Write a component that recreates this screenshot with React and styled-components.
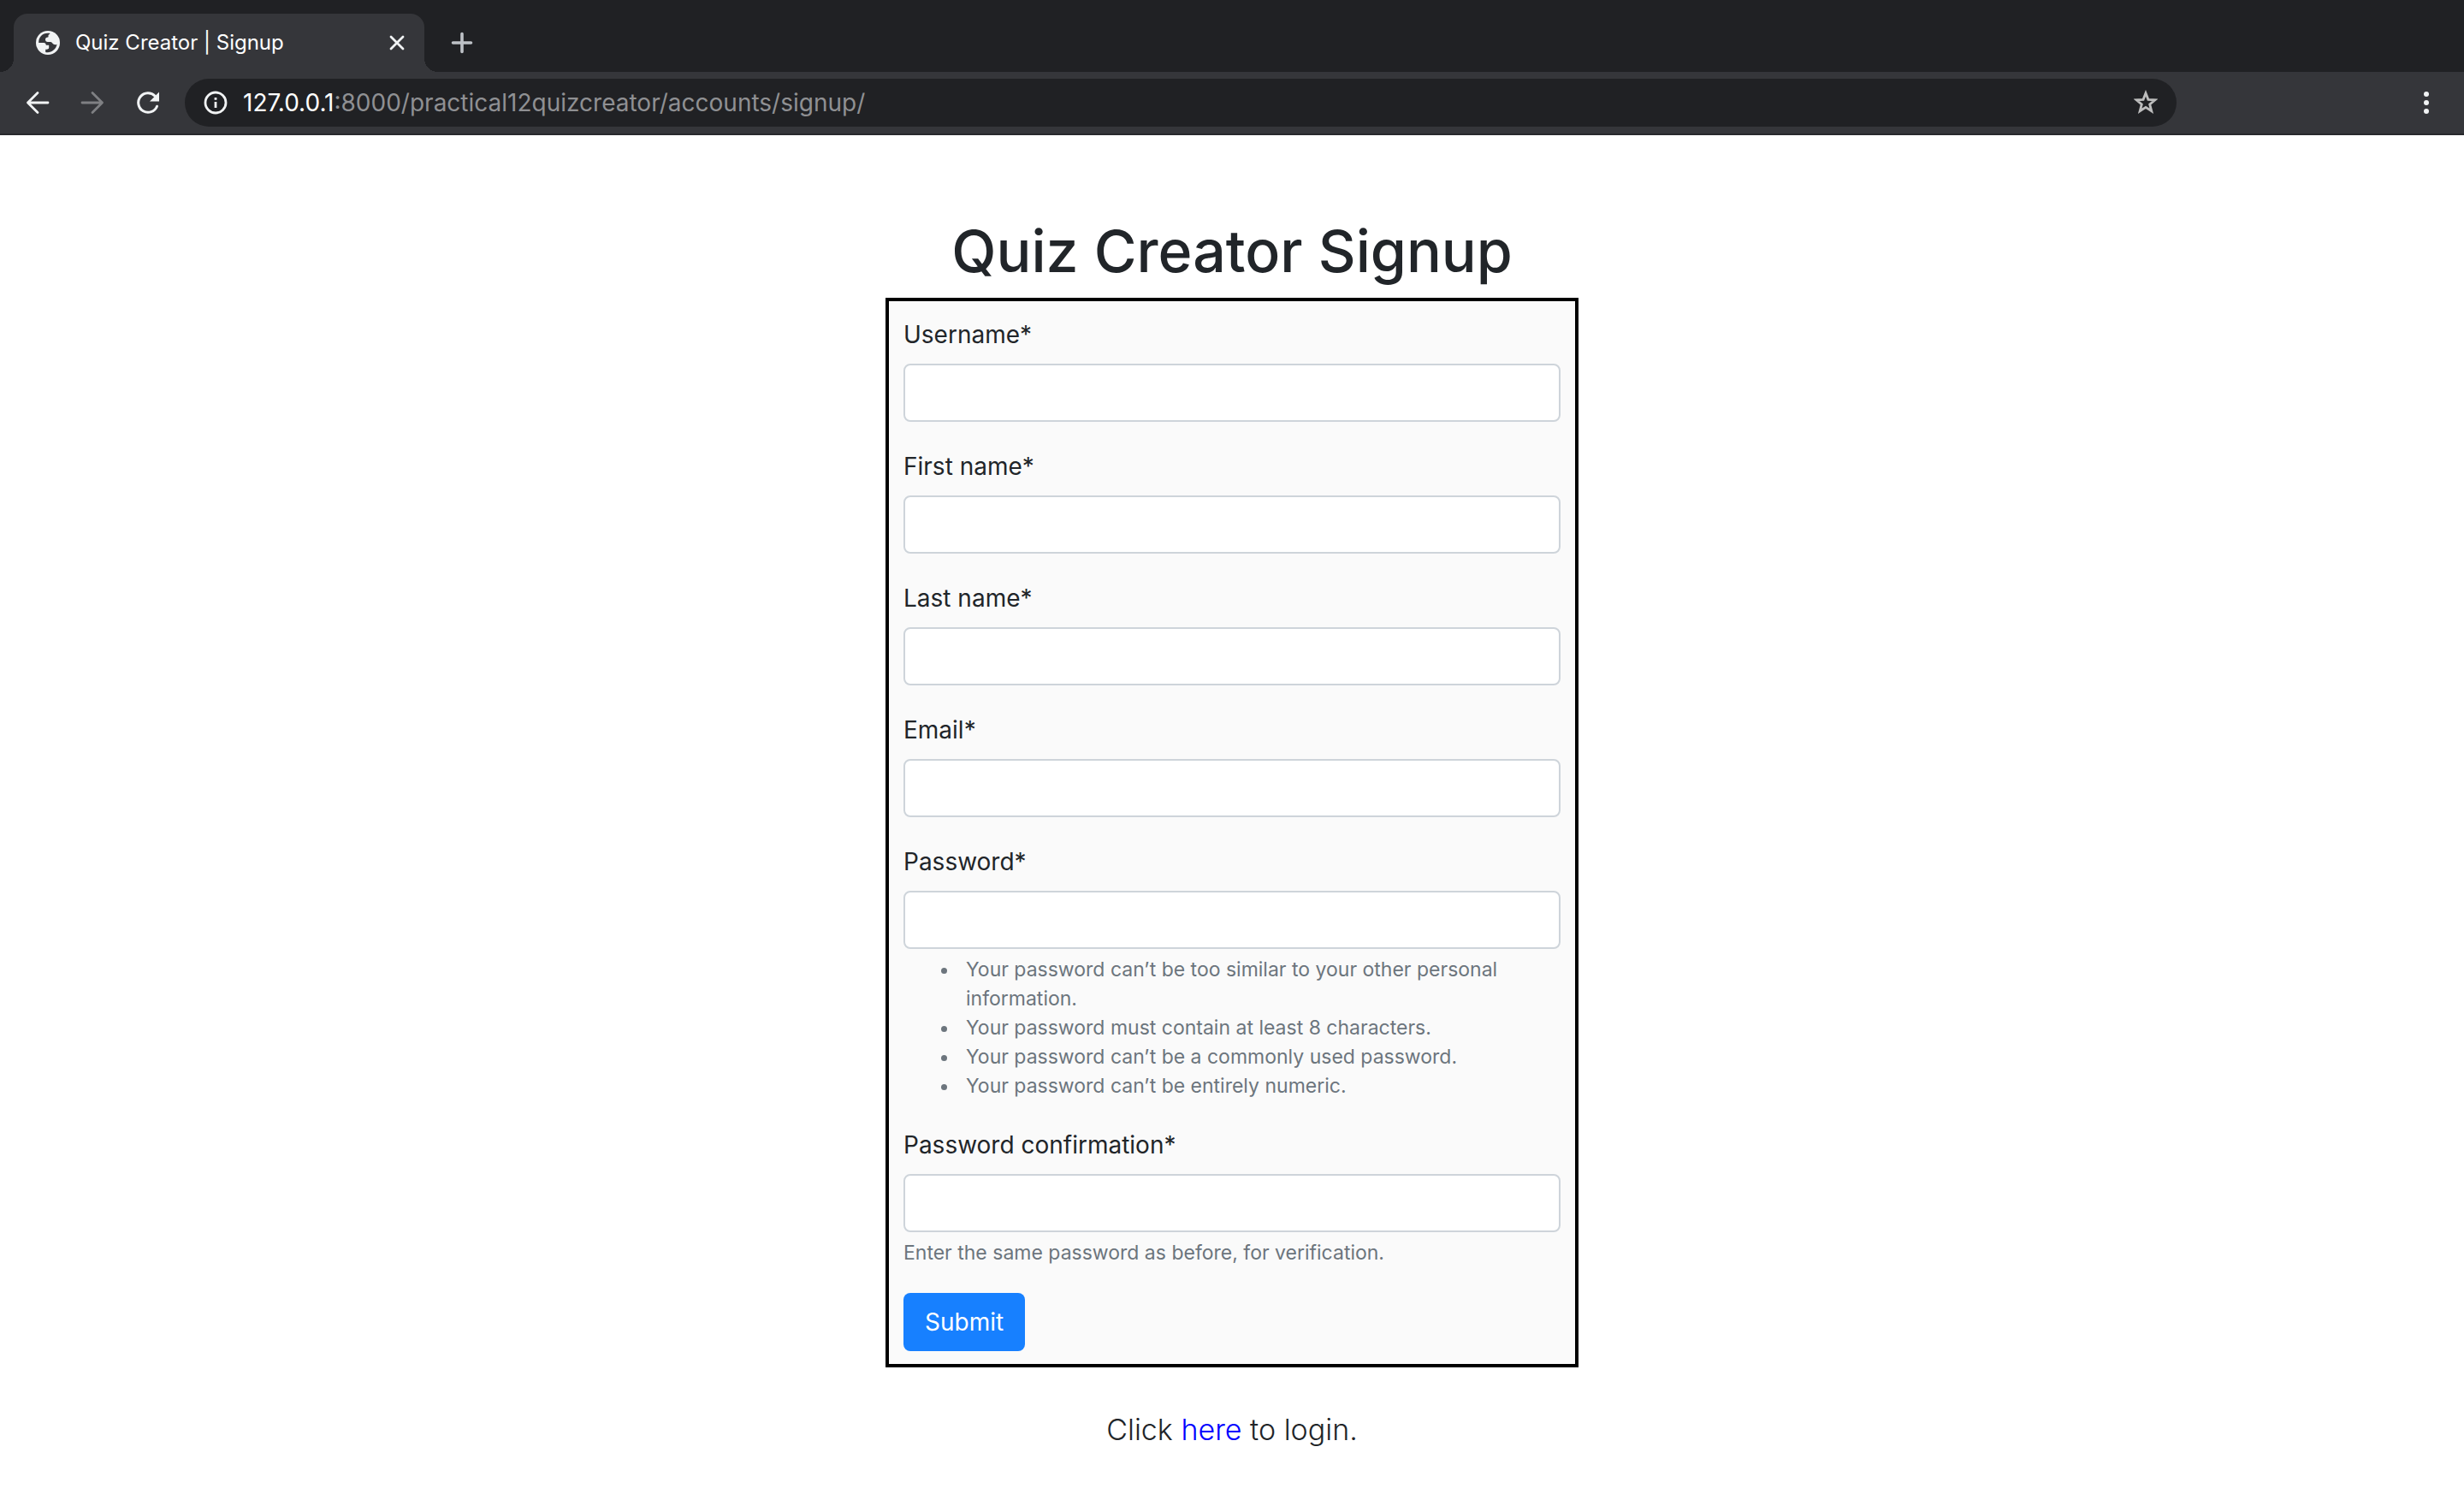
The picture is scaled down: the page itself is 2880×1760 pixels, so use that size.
import React from "react";
import styled, { createGlobalStyle } from "styled-components";

const GlobalStyle = createGlobalStyle`
  * { box-sizing: border-box; }
  body {
    margin: 0;
    background: #fff;
    color: #212529;
    font-family: Inter, Roboto, "Liberation Sans", sans-serif;
  }
  button, input { font: inherit; }
`;

const TabStrip = styled.header`
  display: flex;
  align-items: flex-end;
  height: 84px;
  padding: 0 16px;
  background: #202124;
`;

const Tab = styled.div`
  position: relative;
  display: flex;
  align-items: center;
  width: 480px;
  height: 68px;
  padding: 0 18px 0 26px;
  border-radius: 16px 16px 0 0;
  background: #35363a;
  color: #fff;

  &::before,
  &::after {
    content: "";
    position: absolute;
    bottom: 0;
    width: 16px;
    height: 16px;
  }
  &::before {
    right: 100%;
    background: radial-gradient(circle at 0 0, transparent 16px, #35363a 16px);
  }
  &::after {
    left: 100%;
    background: radial-gradient(circle at 100% 0, transparent 16px, #35363a 16px);
  }
`;

const TabTitle = styled.span`
  flex: 1;
  margin-left: 18px;
  font-size: 24px;
  line-height: 32px;
  white-space: nowrap;
`;

const IconButton = styled.button`
  display: flex;
  align-items: center;
  justify-content: center;
  flex: none;
  width: ${(p) => p.$width || 28}px;
  height: 68px;
  padding: 0;
  border: 0;
  background: none;
  color: ${(p) => p.$color || "#f1f3f4"};
`;

const NewTabButton = styled(IconButton)`
  margin-left: 28px;
`;

const Toolbar = styled.nav`
  display: flex;
  align-items: center;
  height: 74px;
  padding-left: 12px;
  border-bottom: 2px solid #28292c;
  background: #35363a;
`;

const AddressBar = styled.div`
  display: flex;
  align-items: center;
  flex: 1;
  height: 56px;
  margin-left: 12px;
  padding: 0 22px;
  border-radius: 28px;
  background: #202124;
  color: #f1f3f4;
`;

const Url = styled.span`
  flex: 1;
  margin-left: 18px;
  font-size: 28px;
  line-height: 40px;
  color: #8f9093;
  white-space: nowrap;
`;

const Host = styled.span`
  color: #fff;
`;

const ToolbarEnd = styled.div`
  display: flex;
  justify-content: flex-end;
  width: 336px;
  padding-right: 30px;
`;

const Page = styled.main`
  display: flex;
  flex-direction: column;
  align-items: center;
  padding: 91px 16px;
`;

const Heading = styled.h1`
  margin: 0 0 11px;
  font-size: 68px;
  font-weight: 500;
  line-height: 88px;
`;

const Form = styled.form`
  width: 810px;
  max-width: 100%;
  padding: 17px 17px 15px;
  border: 4px solid #000;
  background: #fafafa;
`;

const Field = styled.div`
  margin-bottom: 30px;
`;

const Label = styled.label`
  display: block;
  margin-bottom: 11px;
  font-size: 28px;
  line-height: 45px;
`;

const TextInput = styled.input`
  display: block;
  width: 100%;
  height: 68px;
  padding: 10px 22px;
  border: 2px solid #ced4da;
  border-radius: 8px;
  background: #fff;
  font-size: 28px;
`;

const Help = styled.div`
  margin-top: 7px;
  color: #6c757d;
  font-size: 23px;
  line-height: 34px;
`;

const RuleList = styled.ul`
  margin: 0;
  padding-left: 65px;
`;

const Rule = styled.li`
  padding-left: 8px;
`;

const SubmitButton = styled.button`
  display: block;
  height: 68px;
  padding: 0 25px;
  border: 0;
  border-radius: 8px;
  background: #1780ff;
  color: #fff;
  font-size: 28px;
`;

const LoginLine = styled.p`
  margin: 50px 0 0;
  font-size: 34px;
  font-weight: 300;
  line-height: 46px;
`;

const LoginLink = styled.a`
  color: #00f;
  text-decoration: none;
`;

const Icon = ({ size = 28, children }) => (
  <svg
    width={size}
    height={size}
    viewBox="0 0 28 28"
    fill="none"
    stroke="currentColor"
    strokeWidth="2.8"
    strokeLinecap="round"
    strokeLinejoin="round"
    aria-hidden="true"
  >
    {children}
  </svg>
);

const GlobeIcon = () => (
  <Icon>
    <circle cx="14" cy="14" r="14" fill="#f1f3f4" stroke="none" />
    <path
      d="M16.500 3C12 2.300 8.500 3.500 6 6 4 8.200 3.200 10.500 3.200 14h6c1.600 0 2.600 1.200 2.600 2.800h3.400v3c0 1.400-1.400 2-4 2v3.100c5.600 1.500 12.200-2.400 13.400-9.100-1.500.8-3 .7-4.300-.2-1.200-.9-1.600-2.600-3.300-2.600h-3.200c-1.800 0-2.800-1.200-2.800-2.700 0-1.600 1.200-2.600 3-2.700 1 0 .2-1.500.6-2.600.3-.9 1.900-1 1.900-2z"
      fill="#35363a"
      stroke="none"
    />
  </Icon>
);

const fields = [
  { id: "username", label: "Username*", type: "text" },
  { id: "first_name", label: "First name*", type: "text" },
  { id: "last_name", label: "Last name*", type: "text" },
  { id: "email", label: "Email*", type: "email" },
  {
    id: "password1",
    label: "Password*",
    type: "password",
    rules: [
      "Your password can’t be too similar to your other personal information.",
      "Your password must contain at least 8 characters.",
      "Your password can’t be a commonly used password.",
      "Your password can’t be entirely numeric.",
    ],
  },
  {
    id: "password2",
    label: "Password confirmation*",
    type: "password",
    hint: "Enter the same password as before, for verification.",
  },
];

const FormField = ({ id, label, type, rules, hint }) => (
  <Field>
    <Label htmlFor={id}>{label}</Label>
    <TextInput id={id} name={id} type={type} />
    {rules && (
      <Help>
        <RuleList>
          {rules.map((rule) => (
            <Rule key={rule}>{rule}</Rule>
          ))}
        </RuleList>
      </Help>
    )}
    {hint && <Help>{hint}</Help>}
  </Field>
);

export default function App() {
  return (
    <>
      <GlobalStyle />
      <TabStrip>
        <Tab>
          <GlobeIcon />
          <TabTitle>Quiz Creator | Signup</TabTitle>
          <IconButton aria-label="Close tab">
            <Icon>
              <path d="M7 7l14 14M21 7L7 21" />
            </Icon>
          </IconButton>
        </Tab>
        <NewTabButton aria-label="New tab" $width={32} $color="#bdc1c6">
          <Icon>
            <path d="M14 3.500v21M3.500 14h21" strokeWidth="3.600" />
          </Icon>
        </NewTabButton>
      </TabStrip>
      <Toolbar>
        <IconButton aria-label="Back" $width={64}>
          <Icon>
            <path d="M26 14H2.500M14 2.500L2.500 14 14 25.500" />
          </Icon>
        </IconButton>
        <IconButton aria-label="Forward" $width={64} $color="#7f8083">
          <Icon>
            <path d="M2 14h23.500M14 2.500L25.500 14 14 25.500" />
          </Icon>
        </IconButton>
        <IconButton aria-label="Reload" $width={64}>
          <Icon>
            <path d="M25.500 18.200A11.300 11.300 0 1 1 23.200 6.200" strokeWidth="3" />
            <path d="M28 1.500v11H17z" fill="currentColor" stroke="none" />
          </Icon>
        </IconButton>
        <AddressBar>
          <Icon>
            <circle cx="14" cy="14" r="12" />
            <path d="M14 13v7" strokeLinecap="butt" />
            <path d="M14 8v2.800" strokeLinecap="butt" />
          </Icon>
          <Url>
            <Host>127.0.0.1</Host>:8000/practical12quizcreator/accounts/signup/
          </Url>
          <IconButton aria-label="Bookmark this tab" $color="#bdbdbd">
            <Icon size={30}>
              <path
                d="M14 2.800l2.900 7.500 8 .5-6.200 5.100 2.100 7.900-6.800-4.400-6.800 4.400 2.100-7.900-6.200-5.100 8-.5z"
                strokeLinejoin="miter"
              />
            </Icon>
          </IconButton>
        </AddressBar>
        <ToolbarEnd>
          <IconButton aria-label="Menu">
            <Icon>
              <g fill="currentColor" stroke="none">
                <circle cx="14" cy="4" r="3" />
                <circle cx="14" cy="14" r="3" />
                <circle cx="14" cy="24" r="3" />
              </g>
            </Icon>
          </IconButton>
        </ToolbarEnd>
      </Toolbar>
      <Page>
        <Heading>Quiz Creator Signup</Heading>
        <Form>
          {fields.map((field) => (
            <FormField key={field.id} {...field} />
          ))}
          <SubmitButton type="submit">Submit</SubmitButton>
        </Form>
        <LoginLine>
          Click <LoginLink href="#login">here</LoginLink> to login.
        </LoginLine>
      </Page>
    </>
  );
}
